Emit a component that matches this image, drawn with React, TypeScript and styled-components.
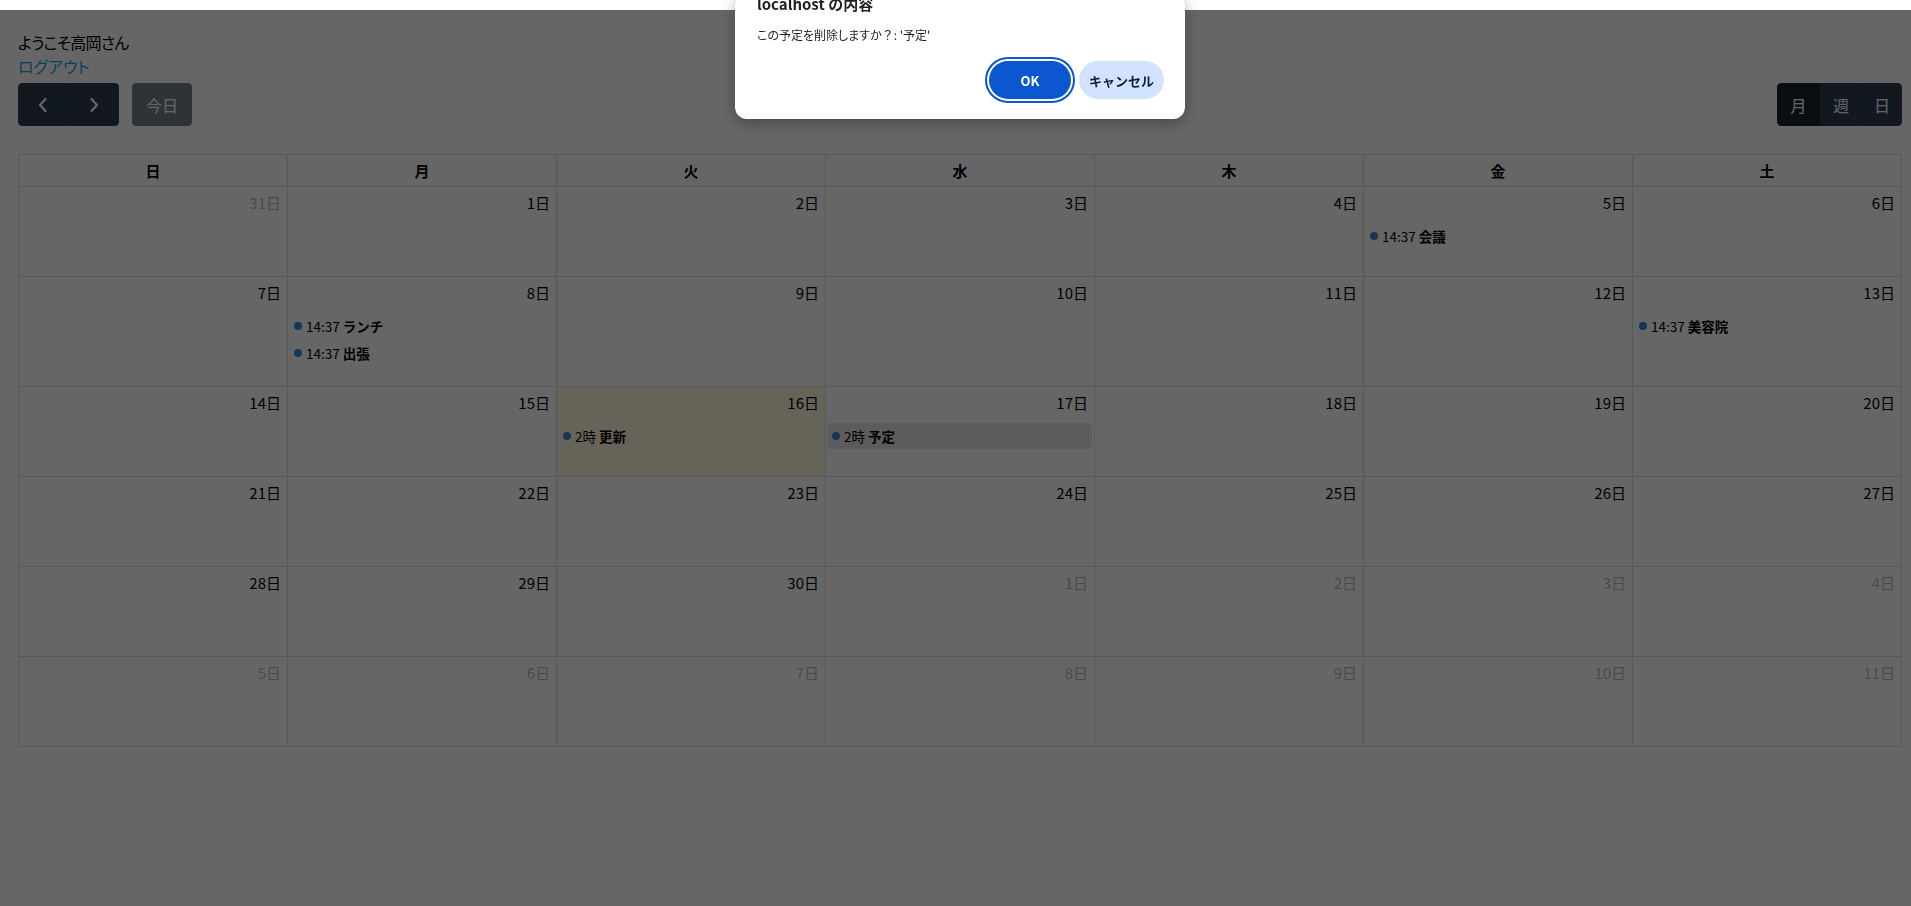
import React from 'react';
import styled, { createGlobalStyle, css } from 'styled-components';

const GlobalStyle = createGlobalStyle`
  html, body {
    margin: 0;
    padding: 0;
    background: #ffffff;
    font-family: "Noto Sans CJK JP", "Noto Sans", sans-serif;
    color: #000;
  }
`;

const Page = styled.div`
  padding: 30px 9px 40px 18px;
`;

const Welcome = styled.div`
  font-size: 16px;
  line-height: 24px;
  font-feature-settings: "palt";
  letter-spacing: -0.8px;
`;

const LogoutLink = styled.a`
  display: block;
  width: fit-content;
  font-size: 16px;
  line-height: 24px;
  color: #1ea0e6;
  text-decoration: none;
  font-feature-settings: "palt";
`;

const Toolbar = styled.div`
  display: flex;
  justify-content: space-between;
  align-items: center;
  margin: 5px 0 28px;
`;

const ToolbarLeft = styled.div`
  display: flex;
  gap: 13px;
`;

const ButtonGroup = styled.div`
  display: inline-flex;

  & > button {
    border-radius: 0;
  }
  & > button:first-child {
    border-top-left-radius: 4px;
    border-bottom-left-radius: 4px;
  }
  & > button:last-child {
    border-top-right-radius: 4px;
    border-bottom-right-radius: 4px;
  }
`;

const FcButton = styled.button<{ $active?: boolean; $w?: number }>`
  height: 43px;
  width: ${p => (p.$w ? `${p.$w}px` : 'auto')};
  padding: 0 ${p => (p.$w ? 0 : 13)}px;
  display: inline-flex;
  align-items: center;
  justify-content: center;
  background: #2c3e50;
  border: 1px solid #2c3e50;
  border-radius: 4px;
  color: #fff;
  font-family: inherit;
  font-size: 16px;
  cursor: pointer;
  ${p => p.$active && css`
    background: #1a252f;
    border-color: #151e27;
  `}
  &:disabled {
    opacity: 0.65;
    cursor: default;
  }
`;

const Calendar = styled.div`
  display: grid;
  grid-template-columns: repeat(7, 1fr);
  border-left: 1px solid #ddd;
  border-top: 1px solid #ddd;
`;

const HeadCell = styled.div`
  height: 32px;
  box-sizing: border-box;
  border-right: 1px solid #ddd;
  border-bottom: 1px solid #ddd;
  display: flex;
  align-items: center;
  justify-content: center;
  font-size: 15px;
  font-weight: 700;
`;

const DayCell = styled.div<{ $today?: boolean }>`
  min-height: 90px;
  box-sizing: border-box;
  border-right: 1px solid #ddd;
  border-bottom: 1px solid #ddd;
  padding-bottom: 19px;
  background: ${p => (p.$today ? 'rgba(255, 220, 40, 0.15)' : 'transparent')};
`;

const DayNumber = styled.div<{ $other?: boolean }>`
  text-align: right;
  padding: 4px 6px 4px 4px;
  font-size: 15px;
  line-height: 24px;
  color: ${p => (p.$other ? 'rgba(0, 0, 0, 0.3)' : '#000')};
`;

const EventList = styled.div`
  margin-top: 4px;
`;

const EventItem = styled.div<{ $hover?: boolean }>`
  height: 26px;
  margin: 0 2px 1px;
  display: flex;
  align-items: center;
  border-radius: 4px;
  font-size: 13.5px;
  white-space: nowrap;
  background: ${p => (p.$hover ? 'rgba(0, 0, 0, 0.1)' : 'transparent')};
`;

const EventDot = styled.span`
  width: 8px;
  height: 8px;
  margin: 0 4px;
  border-radius: 50%;
  background: #3788d8;
  flex: none;
`;

const EventTime = styled.span`
  margin-right: 3px;
`;

const EventTitle = styled.span`
  font-weight: 700;
`;

const Overlay = styled.div`
  position: fixed;
  left: 0;
  right: 0;
  top: 10px;
  bottom: 0;
  background: rgba(0, 0, 0, 0.6);
`;

const Dialog = styled.div`
  position: fixed;
  left: 735px;
  top: -6px;
  width: 450px;
  box-sizing: border-box;
  padding: 0 21px 20px 22px;
  background: #fff;
  border-radius: 12px;
  box-shadow: 0 4px 16px rgba(0, 0, 0, 0.3);
`;

const DialogTitle = styled.div`
  font-size: 15px;
  line-height: 20px;
  font-weight: 700;
  color: #1f1f1f;
`;

const DialogMessage = styled.div`
  margin-top: 12px;
  font-size: 12px;
  line-height: 18px;
  color: #1f1f1f;
  font-feature-settings: "palt";
`;

const WideMark = styled.span`
  font-feature-settings: normal;
`;

const DialogButtons = styled.div`
  display: flex;
  justify-content: flex-end;
  gap: 8px;
  margin-top: 17px;
`;

const DialogButton = styled.button<{ $primary?: boolean }>`
  height: 38px;
  border: none;
  border-radius: 19px;
  font-family: inherit;
  font-size: 13px;
  font-weight: 700;
  cursor: pointer;
  ${p => p.$primary
    ? css`
      width: 82px;
      background: #0b57d0;
      color: #fff;
      outline: 2px solid #0b57d0;
      outline-offset: 2px;
    `
    : css`
      width: 85px;
      background: #d3e3fd;
      color: #041e49;
    `}
`;

const Chevron = ({ dir }: { dir: 'left' | 'right' }) => (
  <svg width="12" height="16" viewBox="0 0 12 16" fill="none">
    <polyline
      points={dir === 'left' ? '8.5,2 3,8 8.5,14' : '3.5,2 9,8 3.5,14'}
      stroke="#fff"
      strokeWidth="2.2"
      strokeLinecap="round"
      strokeLinejoin="round"
    />
  </svg>
);

type Ev = { time: string; title: string; hover?: boolean };

const events: Record<number, Ev[]> = {
  5: [{ time: '14:37', title: '会議' }],
  8: [{ time: '14:37', title: 'ランチ' }, { time: '14:37', title: '出張' }],
  13: [{ time: '14:37', title: '美容院' }],
  16: [{ time: '2時', title: '更新' }],
  17: [{ time: '2時', title: '予定', hover: true }],
};

const weekNames = ['日', '月', '火', '水', '木', '金', '土'];

const days: { day: number; other: boolean }[] = [];
days.push({ day: 31, other: true });
for (let i = 1; i <= 30; i++) days.push({ day: i, other: false });
for (let i = 1; i <= 11; i++) days.push({ day: i, other: true });

const App = () => {
  return (
    <>
      <GlobalStyle />
      <Page>
        <Welcome>ようこそ高岡さん</Welcome>
        <LogoutLink href="#">ログアウト</LogoutLink>
        <Toolbar>
          <ToolbarLeft>
            <ButtonGroup>
              <FcButton $w={50}><Chevron dir="left" /></FcButton>
              <FcButton $w={51}><Chevron dir="right" /></FcButton>
            </ButtonGroup>
            <FcButton disabled>今日</FcButton>
          </ToolbarLeft>
          <ButtonGroup>
            <FcButton $active $w={43}>月</FcButton>
            <FcButton $w={42}>週</FcButton>
            <FcButton $w={40}>日</FcButton>
          </ButtonGroup>
        </Toolbar>
        <Calendar>
          {weekNames.map(n => <HeadCell key={n}>{n}</HeadCell>)}
          {days.map((d, idx) => {
            const evs = d.other ? [] : events[d.day] || [];
            return (
              <DayCell key={idx} $today={!d.other && d.day === 16}>
                <DayNumber $other={d.other}>{d.day}日</DayNumber>
                {evs.length > 0 && (
                  <EventList>
                    {evs.map((e, i) => (
                      <EventItem key={i} $hover={e.hover}>
                        <EventDot />
                        <EventTime>{e.time}</EventTime>
                        <EventTitle>{e.title}</EventTitle>
                      </EventItem>
                    ))}
                  </EventList>
                )}
              </DayCell>
            );
          })}
        </Calendar>
      </Page>
      <Overlay />
      <Dialog>
        <DialogTitle>localhost の内容</DialogTitle>
        <DialogMessage>この予定を削除しますか<WideMark>？</WideMark>: '予定'</DialogMessage>
        <DialogButtons>
          <DialogButton $primary>OK</DialogButton>
          <DialogButton>キャンセル</DialogButton>
        </DialogButtons>
      </Dialog>
    </>
  );
};

export default App;
